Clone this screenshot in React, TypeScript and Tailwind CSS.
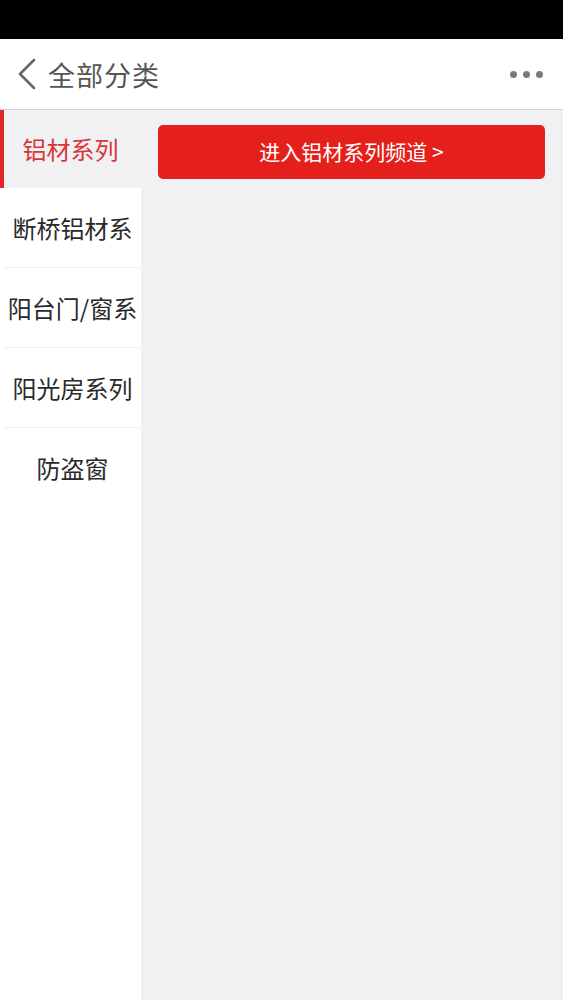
const categories = ["铝材系列", "断桥铝材系", "阳台门/窗系", "阳光房系列", "防盗窗"];

export default function App() {
  const active = 0;
  return (
    <div
      className="flex flex-col h-[1000px] w-[563px] overflow-hidden bg-[#f1f0f3]"
      style={{ fontFamily: '"Noto Sans CJK SC", "Noto Sans", sans-serif' }}
    >
      <div className="h-[39px] shrink-0 bg-black" />
      <header className="h-[71px] shrink-0 flex items-center bg-white border-b border-[#cfcfcf] px-[16px]">
        <svg width="22" height="32" viewBox="0 0 22 32" className="mr-[10px]">
          <path d="M18 2 L4 16 L18 30" fill="none" stroke="#666" strokeWidth="2.6" strokeLinecap="round" strokeLinejoin="round" />
        </svg>
        <h1 className="text-[27px] leading-none text-[#555] tracking-[1px]">全部分类</h1>
        <div className="ml-auto flex gap-[6px] mr-[4px]">
          <span className="w-[7px] h-[7px] rounded-full bg-[#7a7a7a]" />
          <span className="w-[7px] h-[7px] rounded-full bg-[#7a7a7a]" />
          <span className="w-[7px] h-[7px] rounded-full bg-[#7a7a7a]" />
        </div>
      </header>
      <div className="flex flex-1">
        <nav className="w-[141px] shrink-0 bg-white">
          {categories.map((c, i) =>
            i === active ? (
              <div key={c} className="h-[78px] flex items-center justify-center bg-[#f1f0f3] border-l-[4px] border-[#e0262a] text-[#d9363a] text-[24px] pr-[4px]">
                {c}
              </div>
            ) : (
              <div
                key={c}
                className={`h-[80px] flex items-center justify-center ml-[4px] text-[#2a2a2a] text-[24px] whitespace-nowrap ${
                  i < categories.length - 1 ? "border-b border-[#f0f0f0]" : ""
                }`}
              >
                {c}
              </div>
            )
          )}
        </nav>
        <main className="flex-1 pl-[17px] pr-[18px] pt-[15px]">
          <button className="w-full h-[54px] rounded-[5px] bg-[#e5201c] text-white text-[21px] flex items-center justify-center">
            进入铝材系列频道 &gt;
          </button>
        </main>
      </div>
    </div>
  );
}
